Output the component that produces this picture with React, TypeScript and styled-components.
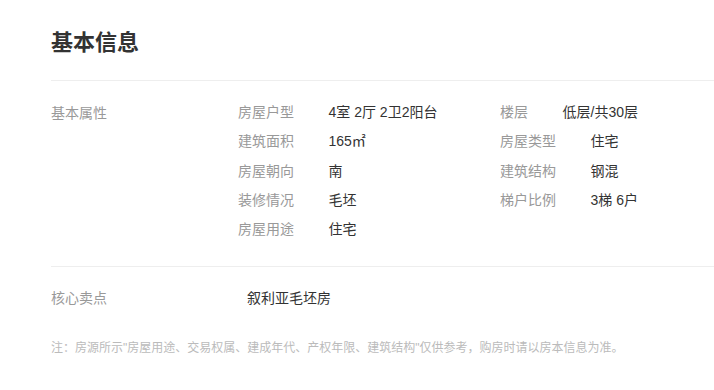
import React from "react";
import styled, { createGlobalStyle } from "styled-components";

const GlobalStyle = createGlobalStyle`
  body {
    margin: 0;
    background: #fff;
    font-family: "Liberation Sans", "Noto Sans CJK SC", sans-serif;
  }
`;

const Wrapper = styled.div`
  padding: 28px 0 0 51px;
`;

const Header = styled.div`
  padding-bottom: 22px;
  border-bottom: 1px solid #eeeeee;
`;

const Title = styled.h2`
  margin: 0;
  font-size: 22px;
  line-height: 30px;
  font-weight: bold;
  color: #333;
`;

type BlockProps = {
  top: number;
  bottom: number;
  divided?: boolean;
};

const Block = styled.div<BlockProps>`
  display: flex;
  padding: ${({ top, bottom }) => `${top}px 0 ${bottom}px`};
  border-bottom: ${({ divided }) => (divided ? "1px solid #eeeeee" : "none")};
`;

const BlockLabel = styled.div<{ width: number }>`
  width: ${({ width }) => width}px;
  flex-shrink: 0;
  font-size: 14px;
  line-height: 20px;
  color: #999;
`;

const Lists = styled.div`
  display: flex;
  flex: 1;
  min-width: 0;
  margin-top: -4.5px;
`;

const List = styled.ul<{ width?: number }>`
  list-style: none;
  margin: 0;
  padding: 0;
  flex: ${({ width }) => (width ? `0 0 ${width}px` : "1")};
`;

const Item = styled.li`
  display: flex;
  font-size: 14px;
  line-height: 29.25px;
  height: 29.25px;
  white-space: nowrap;
`;

const ItemLabel = styled.span`
  color: #999;
  margin-right: 34.5px;
`;

const ItemValue = styled.span`
  color: #333;
`;

const CoreValue = styled.div`
  font-size: 14px;
  line-height: 20px;
  color: #333;
`;

const Note = styled.p`
  margin: 30px 0 0;
  font-size: 12px;
  line-height: 20px;
  color: #bbb;
`;

const leftItems = [
  ["房屋户型", "4室 2厅 2卫2阳台"],
  ["建筑面积", "165㎡"],
  ["房屋朝向", "南"],
  ["装修情况", "毛坯"],
  ["房屋用途", "住宅"],
];

const rightItems = [
  ["楼层", "低层/共30层"],
  ["房屋类型", "住宅"],
  ["建筑结构", "钢混"],
  ["梯户比例", "3梯 6户"],
];

const renderList = (items: string[][], width?: number) => (
  <List width={width}>
    {items.map(([label, value]) => (
      <Item key={label}>
        <ItemLabel>{label}</ItemLabel>
        <ItemValue>{value}</ItemValue>
      </Item>
    ))}
  </List>
);

const App = (): JSX.Element => (
  <>
    <GlobalStyle />
    <Wrapper>
      <Header>
        <Title>基本信息</Title>
      </Header>
      <Block top={21.5} bottom={22} divided>
        <BlockLabel width={187}>基本属性</BlockLabel>
        <Lists>
          {renderList(leftItems, 262)}
          {renderList(rightItems)}
        </Lists>
      </Block>
      <Block top={21} bottom={0}>
        <BlockLabel width={196}>核心卖点</BlockLabel>
        <CoreValue>叙利亚毛坯房</CoreValue>
      </Block>
      <Note>
        注：房源所示"房屋用途、交易权属、建成年代、产权年限、建筑结构"仅供参考，购房时请以房本信息为准。
      </Note>
    </Wrapper>
  </>
);

export default App;
